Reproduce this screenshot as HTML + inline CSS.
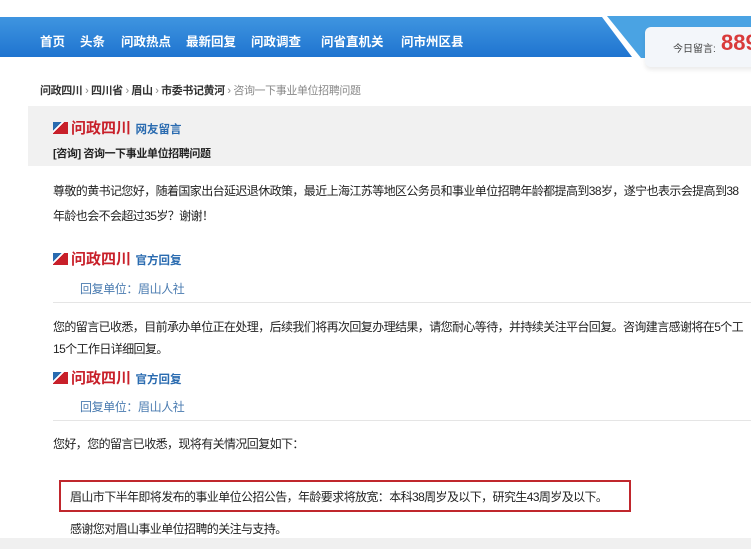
<!DOCTYPE html>
<html><head><meta charset="utf-8"><style>
body{margin:0;width:751px;height:549px;overflow:hidden;background:#fff;font-family:"Liberation Sans","Noto Sans CJK SC",sans-serif;position:relative}
.a{position:absolute;white-space:nowrap}
.nav{left:0;top:17px;height:40px;width:640px;background:linear-gradient(#3f95e0,#1f74d0);clip-path:polygon(0 0,602px 0,632px 40px,0 40px)}
.nav2{left:607px;top:16px;height:42px;width:144px;background:#4aa3e3;clip-path:polygon(0 0,144px 0,144px 42px,34px 42px)}
.tab{left:645px;top:27px;width:120px;height:40px;background:#f3f6fa;border-radius:6px 0 0 6px;box-shadow:0 3px 4px rgba(0,0,0,.08)}
.nv{top:31px;color:#fff;font-size:12.5px;font-weight:bold}
.t{font-size:12px;color:#222;letter-spacing:-0.6px}
.logo{font-size:15px;color:#c8202a;font-weight:bold}
.sub{font-size:11.5px;color:#2a6bb0;font-weight:bold}
.ic{display:inline-block;width:13px;height:12px;vertical-align:-1px;margin-right:3px;background:linear-gradient(135deg,#2a6bb0 35%,#fff 35%,#fff 45%,#c8202a 45%);border-right:2px solid #c8202a}
</style></head><body>
<div class="a nav"></div><div class="a nav2"></div>
<div class="a tab"></div>
<div class="a" style="left:673px;top:40px;font-size:10px;color:#444">今日留言:</div>
<div class="a" style="left:721px;top:30px;font-size:22px;color:#d93a3a;font-weight:bold">889</div>
<div class="a nv" style="left:40px">首页</div>
<div class="a nv" style="left:80px">头条</div>
<div class="a nv" style="left:121px">问政热点</div>
<div class="a nv" style="left:186px">最新回复</div>
<div class="a nv" style="left:251px">问政调查</div>
<div class="a nv" style="left:321px">问省直机关</div>
<div class="a nv" style="left:401px">问市州区县</div>
<div class="a" style="left:40px;top:82px;font-size:11px;color:#333;font-weight:bold;letter-spacing:-0.4px">问政四川 <span style="color:#888;font-weight:normal">›</span> 四川省 <span style="color:#888;font-weight:normal">›</span> 眉山 <span style="color:#888;font-weight:normal">›</span> 市委书记黄河 <span style="color:#888;font-weight:normal">› 咨询一下事业单位招聘问题</span></div>
<div class="a" style="left:28px;top:106px;width:723px;height:60px;background:#f1f1f1"></div>
<div class="a" style="left:53px;top:117px"><span class="ic"></span><span class="logo">问政四川</span> <span class="sub">网友留言</span></div>
<div class="a" style="left:53px;top:145px;font-size:11px;color:#222;font-weight:bold;letter-spacing:-0.4px">[咨询] 咨询一下事业单位招聘问题</div>
<div class="a t" style="left:53px;top:182px">尊敬的黄书记您好，随着国家出台延迟退休政策，最近上海江苏等地区公务员和事业单位招聘年龄都提高到38岁，遂宁也表示会提高到38</div>
<div class="a t" style="left:53px;top:207px">年龄也会不会超过35岁？谢谢！</div>
<div class="a" style="left:53px;top:248px"><span class="ic"></span><span class="logo">问政四川</span> <span class="sub">官方回复</span></div>
<div class="a" style="left:80px;top:280px;font-size:12px;color:#4a7bb0;letter-spacing:-0.4px">回复单位：眉山人社</div>
<div class="a" style="left:53px;top:302px;width:698px;border-top:1px solid #e5e5e5"></div>
<div class="a t" style="left:53px;top:318px">您的留言已收悉，目前承办单位正在处理，后续我们将再次回复办理结果，请您耐心等待，并持续关注平台回复。咨询建言感谢将在5个工</div>
<div class="a t" style="left:53px;top:340px">15个工作日详细回复。</div>
<div class="a" style="left:53px;top:367px"><span class="ic"></span><span class="logo">问政四川</span> <span class="sub">官方回复</span></div>
<div class="a" style="left:80px;top:398px;font-size:12px;color:#4a7bb0;letter-spacing:-0.4px">回复单位：眉山人社</div>
<div class="a" style="left:53px;top:420px;width:698px;border-top:1px solid #e5e5e5"></div>
<div class="a t" style="left:53px;top:435px">您好，您的留言已收悉，现将有关情况回复如下：</div>
<div class="a" style="left:59px;top:480px;width:572px;height:32px;border:2px solid #c0272d;box-sizing:border-box"></div>
<div class="a t" style="left:70px;top:488px">眉山市下半年即将发布的事业单位公招公告，年龄要求将放宽：本科38周岁及以下，研究生43周岁及以下。</div>
<div class="a t" style="left:70px;top:520px">感谢您对眉山事业单位招聘的关注与支持。</div>
<div class="a" style="left:0;top:538px;width:751px;height:11px;background:#f0f0f0"></div>
</body></html>
